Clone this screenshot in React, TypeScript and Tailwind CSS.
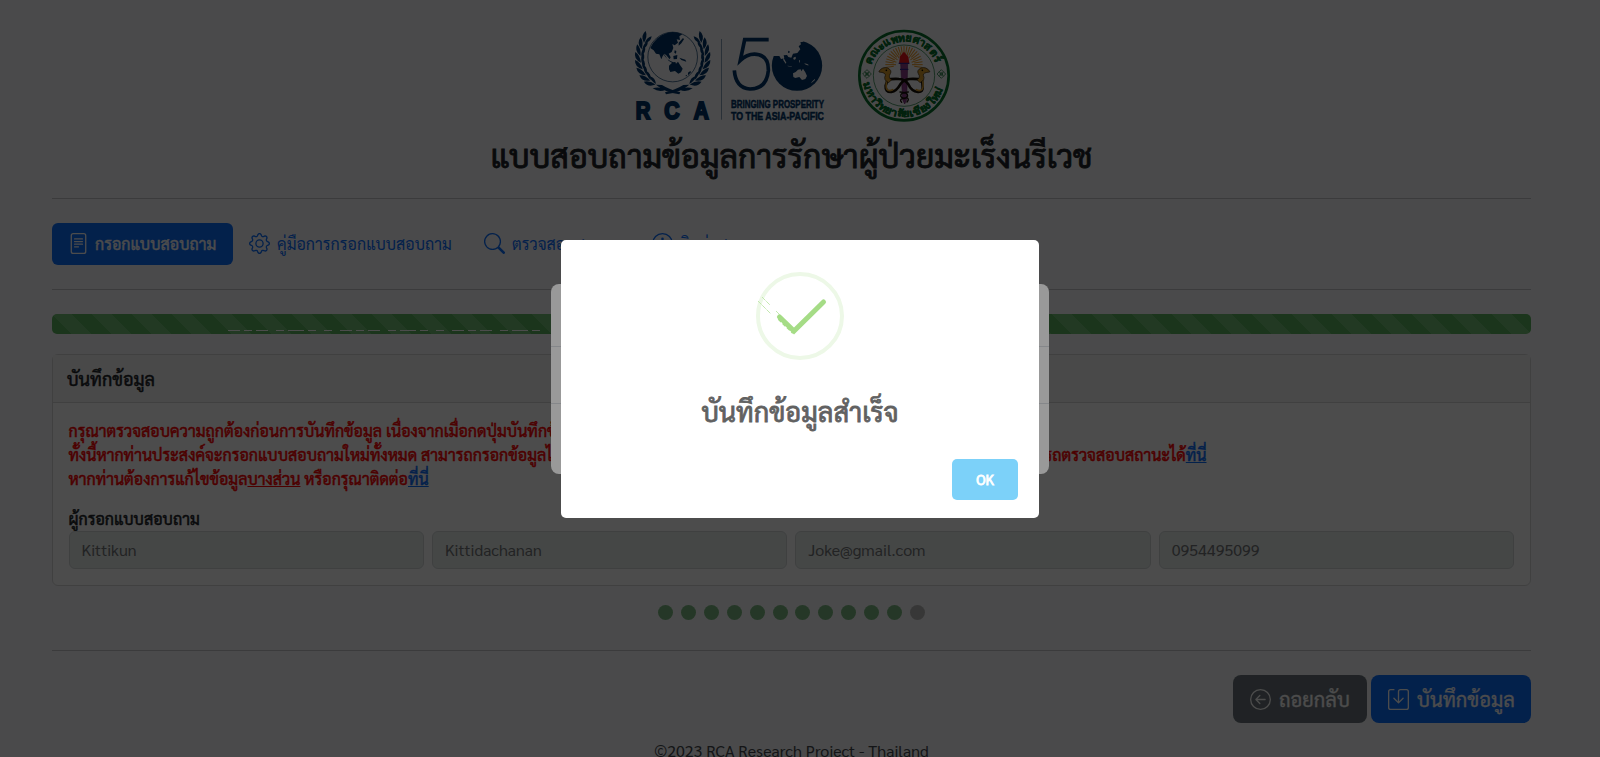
import { BsArrowLeftCircle, BsFileText, BsGear, BsInfoCircle, BsSave, BsSearch } from "react-icons/bs";

const navy = "#003468";
const page = "#f8f9fa";

function Leaves() {
  const leaves = [];
  for (let i = 0; i < 8; i++) {
    const deg = 128 + i * 12.1;
    const a = deg * (Math.PI / 180);
    leaves.push(
      <g key={i} transform={`translate(${158 + 96 * Math.cos(a)} ${112 + 96 * Math.sin(a)}) rotate(${deg + 90})`}>
        <path d="M-10 0Q2 -22 23 -15Q13 -1 -10 0Z" />
        <path d="M-10 2Q4 16 19 9Q10 -1 -10 2Z" />
      </g>,
    );
  }
  return (
    <g>
      {leaves}
      <path d="M108 194Q132 216 178 223L181 217Q150 210 126 195Z" />
      <path d="M98 205Q118 198 137 209Q118 218 98 205Z" />
    </g>
  );
}

function Logos() {
  return (
    <svg viewBox="0 0 1020 330" className="mr-[3px] h-[110px] w-[340px]">
      <g fill={navy}>
        <circle cx="158" cy="111" r="74.500" fill="none" stroke={navy} strokeWidth="2" />
        <path d="M91 84Q107 48 143 38Q166 33 187 43L178 49L180 60L170 58L174 68L164 76L157 72L160 84L155 96L146 101L152 112L149 118L139 106L133 101L128 108L124 118L118 103L108 101L101 91Z" />
        <path d="M128 96L134 108L143 118L151 123L160 127L158 130L146 122ZM160 108L172 105L171 117L161 118ZM178 113L196 119L199 125L184 120ZM176 68L189 54L192 58L184 70L176 77ZM164 91L169 93L168 101L163 98Z" />
        <path d="M147 137L158 127L166 126L168 131L174 125L180 135L188 146L183 157L175 161L165 153L151 156L147 148Z" />
        <path d="M204 158L211 153L213 157L204 166ZM197 166L202 164L198 170Z" />
        <Leaves />
        <g transform="translate(316 0) scale(-1 1)"><Leaves /></g>
      </g>
      <g fill={navy} fontFamily="'Liberation Sans', sans-serif" fontWeight="700" stroke={navy} strokeWidth="6">
        <text x="47" y="296" fontSize="69" textLength="44" lengthAdjust="spacingAndGlyphs">R</text>
        <text x="133" y="296" fontSize="69" textLength="46" lengthAdjust="spacingAndGlyphs">C</text>
        <text x="221" y="296" fontSize="69" textLength="45" lengthAdjust="spacingAndGlyphs">A</text>
      </g>
      <path d="M304 57V299" stroke={navy} strokeWidth="2" opacity=".8" />
      <path d="M446 59H374L361 121Q386 97 417 104Q446 112 445 152Q440 207 390 207Q347 204 343 151" fill="none" stroke={navy} strokeWidth="11" />
      <circle cx="531" cy="137" r="75.500" fill={navy} />
      <path d="M450 108L478 108L483 117L493 115L491 106L501 105L505 111L514 113L519 101L532 99L541 88L536 79L543 73L541 67L550 65L548 54H450Z" fill={page} />
      <path d="M543 67L553 76L551 85L560 86L556 92L547 91ZM543 91L549 93L541 103L536 105ZM505 92L509 94L508 99L504 98Z" fill={navy} />
      <path d="M489 112L494 119L499 128L497 131L490 121ZM520 113L526 110L528 114L525 119L520 118ZM537 121L540 121L539 126L537 129ZM553 130L562 132L567 136L562 136L555 133ZM502 137L515 139L516 140L504 139Z" fill={page} />
      <path d="M519 160L527 156L534 149L542 148L544 154L549 146L556 157L561 168L556 177L546 180L538 171L526 174L520 171ZM580 181L585 177L585 180L577 187L573 190L575 186Z" fill={page} />
      <g fill={navy} fontFamily="'Liberation Sans Narrow', 'Liberation Sans', sans-serif" fontWeight="700" fontSize="34" stroke={navy} strokeWidth="1.5">
        <text x="333" y="263" textLength="279" lengthAdjust="spacingAndGlyphs">BRINGING PROSPERITY</text>
        <text x="333" y="299" textLength="279" lengthAdjust="spacingAndGlyphs">TO THE ASIA-PACIFIC</text>
      </g>
      <g>
        <circle cx="852" cy="167" r="134" fill={page} stroke="#08702d" strokeWidth="8" />
        <circle cx="852" cy="167" r="92" fill="none" stroke="#08702d" strokeWidth="2" />
        <path id="sealTop" d="M755 135A102 102 0 0 1 949 135" fill="none" />
        <path id="sealBottom" d="M731 190A123 123 0 0 0 973 190" fill="none" />
        <g fill="#08702d" fontFamily="'Noto Sans', sans-serif" fontWeight="700" stroke="#08702d" strokeWidth="1.5">
          <text fontSize="32"><textPath href="#sealTop" textLength="250" lengthAdjust="spacingAndGlyphs">คณะแพทยศาสตร์</textPath></text>
          <text fontSize="31"><textPath href="#sealBottom" textLength="325" lengthAdjust="spacingAndGlyphs">มหาวิทยาลัยเชียงใหม่</textPath></text>
        </g>
        {[741, 964].map((x) => (
          <g key={x} transform={`translate(${x} 162)`} fill="none" stroke="#08702d" strokeWidth="2">
            <path d="M0 -13L13 0L0 13L-13 0ZM-7 -7L7 7M7 -7L-7 7" />
            <circle r="4" />
          </g>
        ))}
        <g stroke="#ee9a26" strokeWidth="3">
          {Array.from({ length: 23 }, (_, i) => (
            <path key={i} d={`M0 ${i % 2 ? -24 : -31}V-56`} transform={`translate(852 134) rotate(${-99 + i * 9})`} />
          ))}
        </g>
        <path d="M842 130L848 239L854 252L860 239L863 130Z" fill="#8d3f8a" stroke="#6a276a" strokeWidth="2" />
        <path d="M837 130L840 109L852 95L865 110L868 130Z" fill="#ef171b" />
        <path d="M836 130H868M840 148H865" stroke="#35258e" strokeWidth="4" />
        <g fill="none" strokeLinecap="round">
          <path d="M802 180Q801 186 797 197Q795 217 814 216Q829 214 841 193Q851 178 869 177Q895 176 905 180" stroke="#171008" strokeWidth="8" />
          <path d="M906 180Q907 186 908 199Q910 217 894 216Q874 214 865 193Q854 177 837 177Q812 176 802 180" stroke="#171008" strokeWidth="8" />
          <path d="M800 182Q797 200 800 207Q806 215 818 209M908 182Q911 200 907 207Q901 215 889 209" stroke="#d79b2d" strokeWidth="5" />
          <path d="M865 216Q841 217 842 228Q845 237 859 233Q870 236 861 246M840 216Q864 217 863 228Q859 237 846 236Q838 240 845 247" stroke="#171008" strokeWidth="4" />
        </g>
        <path d="M777 154Q787 139 803 144Q817 151 811 161Q803 173 815 179L806 188Q789 180 796 166Q798 158 777 156ZM929 154Q919 139 903 144Q889 151 895 161Q903 173 891 179L900 188Q917 180 910 166Q908 158 929 156Z" fill="#d79b2d" stroke="#31210e" strokeWidth="2" />
        <circle cx="799" cy="151" r="2.500" /><circle cx="907" cy="151" r="2.500" />
      </g>
    </svg>
  );
}

const people = ["Kittikun", "Kittidachanan", "Joke@gmail.com", "0954495099"];

export default function App() {
  return (
    <div className="relative h-[757px] w-full overflow-hidden bg-[#f8f9fa] font-['Sarabun','Noto_Sans_Thai_Looped','Noto_Sans',sans-serif] text-base leading-6 text-[#212529]">
      <main className="ml-[52px] flex w-[1479px] flex-col">
        <header className="flex h-[199px] flex-col items-center border-b border-[#c6c7c8] pt-5">
          <Logos />
          <h1 className="mt-0.5 whitespace-nowrap text-[32px] leading-[46px] [-webkit-text-stroke:0.9px]">แบบสอบถามข้อมูลการรักษาผู้ป่วยมะเร็งนรีเวช</h1>
        </header>
        <nav className="flex h-[91px] items-center whitespace-nowrap border-b border-[#c6c7c8] text-[#0d6efd]">
          <a className="flex h-[42px] w-[181px] items-center gap-1.5 rounded-md bg-[#0d6efd] pb-px pl-4 text-white"><BsFileText size={21} /><span className="[-webkit-text-stroke:0.4px]">กรอกแบบสอบถาม</span></a>
          <a className="flex w-[235px] items-center gap-[7px] pb-px pl-4"><BsGear size={21} />คู่มือการกรอกแบบสอบถาม</a>
          <a className="flex w-[168px] items-center gap-[7px] pb-px pl-4"><BsSearch size={21} />ตรวจสอบสถานะ</a>
          <a className="flex items-center gap-[7px] pb-px pl-4"><BsInfoCircle size={21} />ติดต่อสอบถาม</a>
        </nav>
        <div className="mt-6 flex h-5 flex-col justify-end rounded-[5px] bg-[#5ab35e] bg-[linear-gradient(45deg,rgba(255,255,255,.15)_25%,transparent_25%,transparent_50%,rgba(255,255,255,.15)_50%,rgba(255,255,255,.15)_75%,transparent_75%,transparent)] bg-[size:40px_40px] pb-[3px] pl-[176px]">
          <svg width="315" height="1">
            <path d="M0 .5H315" stroke="#fff" strokeDasharray="12 4 8 4 12 8 8 4 16 4 8 8 8 8" />
          </svg>
        </div>
        <section className="mt-5 h-[232px] rounded-md border border-[#d8d8d9] bg-white">
          <h2 className="flex h-12 items-center border-b border-[#d8d8d9] bg-[#f7f7f7] pl-[14px] text-[18px] [-webkit-text-stroke:0.5px]">บันทึกข้อมูล</h2>
          <div className="pt-4 pl-[15.5px] pr-4">
            <div className="whitespace-nowrap text-[#ff0000] [-webkit-text-stroke:0.5px]">
              <p>กรุณาตรวจสอบความถูกต้องก่อนการบันทึกข้อมูล เนื่องจากเมื่อกดปุ่มบันทึกข้อมูล</p>
              <p className="flex w-[1138px] justify-between"><span>ทั้งนี้หากท่านประสงค์จะกรอกแบบสอบถามใหม่ทั้งหมด สามารถกรอกข้อมูลได้</span><span>สามารถตรวจสอบสถานะได้<a className="text-[#0d6efd] underline">ที่นี่</a></span></p>
              <p>หากท่านต้องการแก้ไขข้อมูล<u>บางส่วน</u> หรือกรุณาติดต่อ<a className="text-[#0d6efd] underline">ที่นี่</a></p>
            </div>
            <p className="mt-4 [-webkit-text-stroke:0.5px]">ผู้กรอกแบบสอบถาม</p>
            <div className="grid grid-cols-4 gap-2">
              {people.map((p) => <div key={p} className="flex h-[38px] items-center rounded-md border border-[#d3d8d8] bg-[#e9efec] px-3 text-[#75777a]">{p}</div>)}
            </div>
          </div>
        </section>
        <div className="mt-[19px] flex justify-center gap-[7.9px]">
          {Array.from({ length: 12 }, (_, i) => <span key={i} className={i < 11 ? "size-[15px] rounded-full bg-[#7dbb82]" : "size-[15px] rounded-full bg-[#bbb]"} />)}
        </div>
        <div className="mt-[30px] flex h-[73px] justify-end gap-1 whitespace-nowrap border-t border-[#c6c7c8] pt-6 text-xl text-white">
          <button className="flex h-12 w-[134px] shrink-0 items-center gap-2 rounded-lg bg-[#6c757d] pl-[17px]"><BsArrowLeftCircle size={21} /><span className="[-webkit-text-stroke:0.3px]">ถอยกลับ</span></button>
          <button className="flex h-12 w-[160px] shrink-0 items-center gap-2 rounded-lg bg-[#0d6efd] pl-[17px]"><BsSave size={21} /><span className="[-webkit-text-stroke:0.3px]">บันทึกข้อมูล</span></button>
        </div>
        <footer className="mt-4 whitespace-nowrap text-center text-[#45494e]">©2023 RCA Research Project - Thailand</footer>
      </main>

      <div className="absolute inset-0 flex justify-center bg-black/50">
        <div className="mt-[284px] flex h-[190px] w-[498px] flex-col rounded-lg bg-white">
          <div className="h-[63px] border-b border-[#dee2e6]" />
          <div className="h-[57px] border-b border-[#dee2e6]" />
        </div>
      </div>
      <div className="absolute inset-0 flex justify-center bg-black/40">
        <div className="mt-[240px] flex h-[278px] w-[478px] flex-col items-center rounded-[5px] bg-white pt-8">
          <svg viewBox="0 0 88 88" className="size-[88px]" fill="none">
            <circle cx="44" cy="44" r="42" stroke="#edf8e7" strokeWidth="4" />
            <path d="M2 29L15 42M6 25L14 33M20 39L24 43" stroke="#c4e9b0" strokeWidth="1" strokeDasharray="5 1" />
            <path d="M23.500 45L38 59L67.500 30" stroke="#a5dc86" strokeWidth="5" strokeLinecap="round" />
            <path d="M22.500 47L37 61" stroke="#a5dc86" strokeWidth="2" strokeDasharray="4 2" />
          </svg>
          <h2 className="mt-[29px] whitespace-nowrap text-[27px] leading-[44px] text-[#616161] [-webkit-text-stroke:0.8px]">บันทึกข้อมูลสำเร็จ</h2>
          <button className="mt-[26px] mr-[21px] h-[41px] w-[66px] self-end rounded-[5px] bg-[#7cd1f9] pb-0.5 text-sm text-white [-webkit-text-stroke:0.8px]">OK</button>
        </div>
      </div>
    </div>
  );
}
